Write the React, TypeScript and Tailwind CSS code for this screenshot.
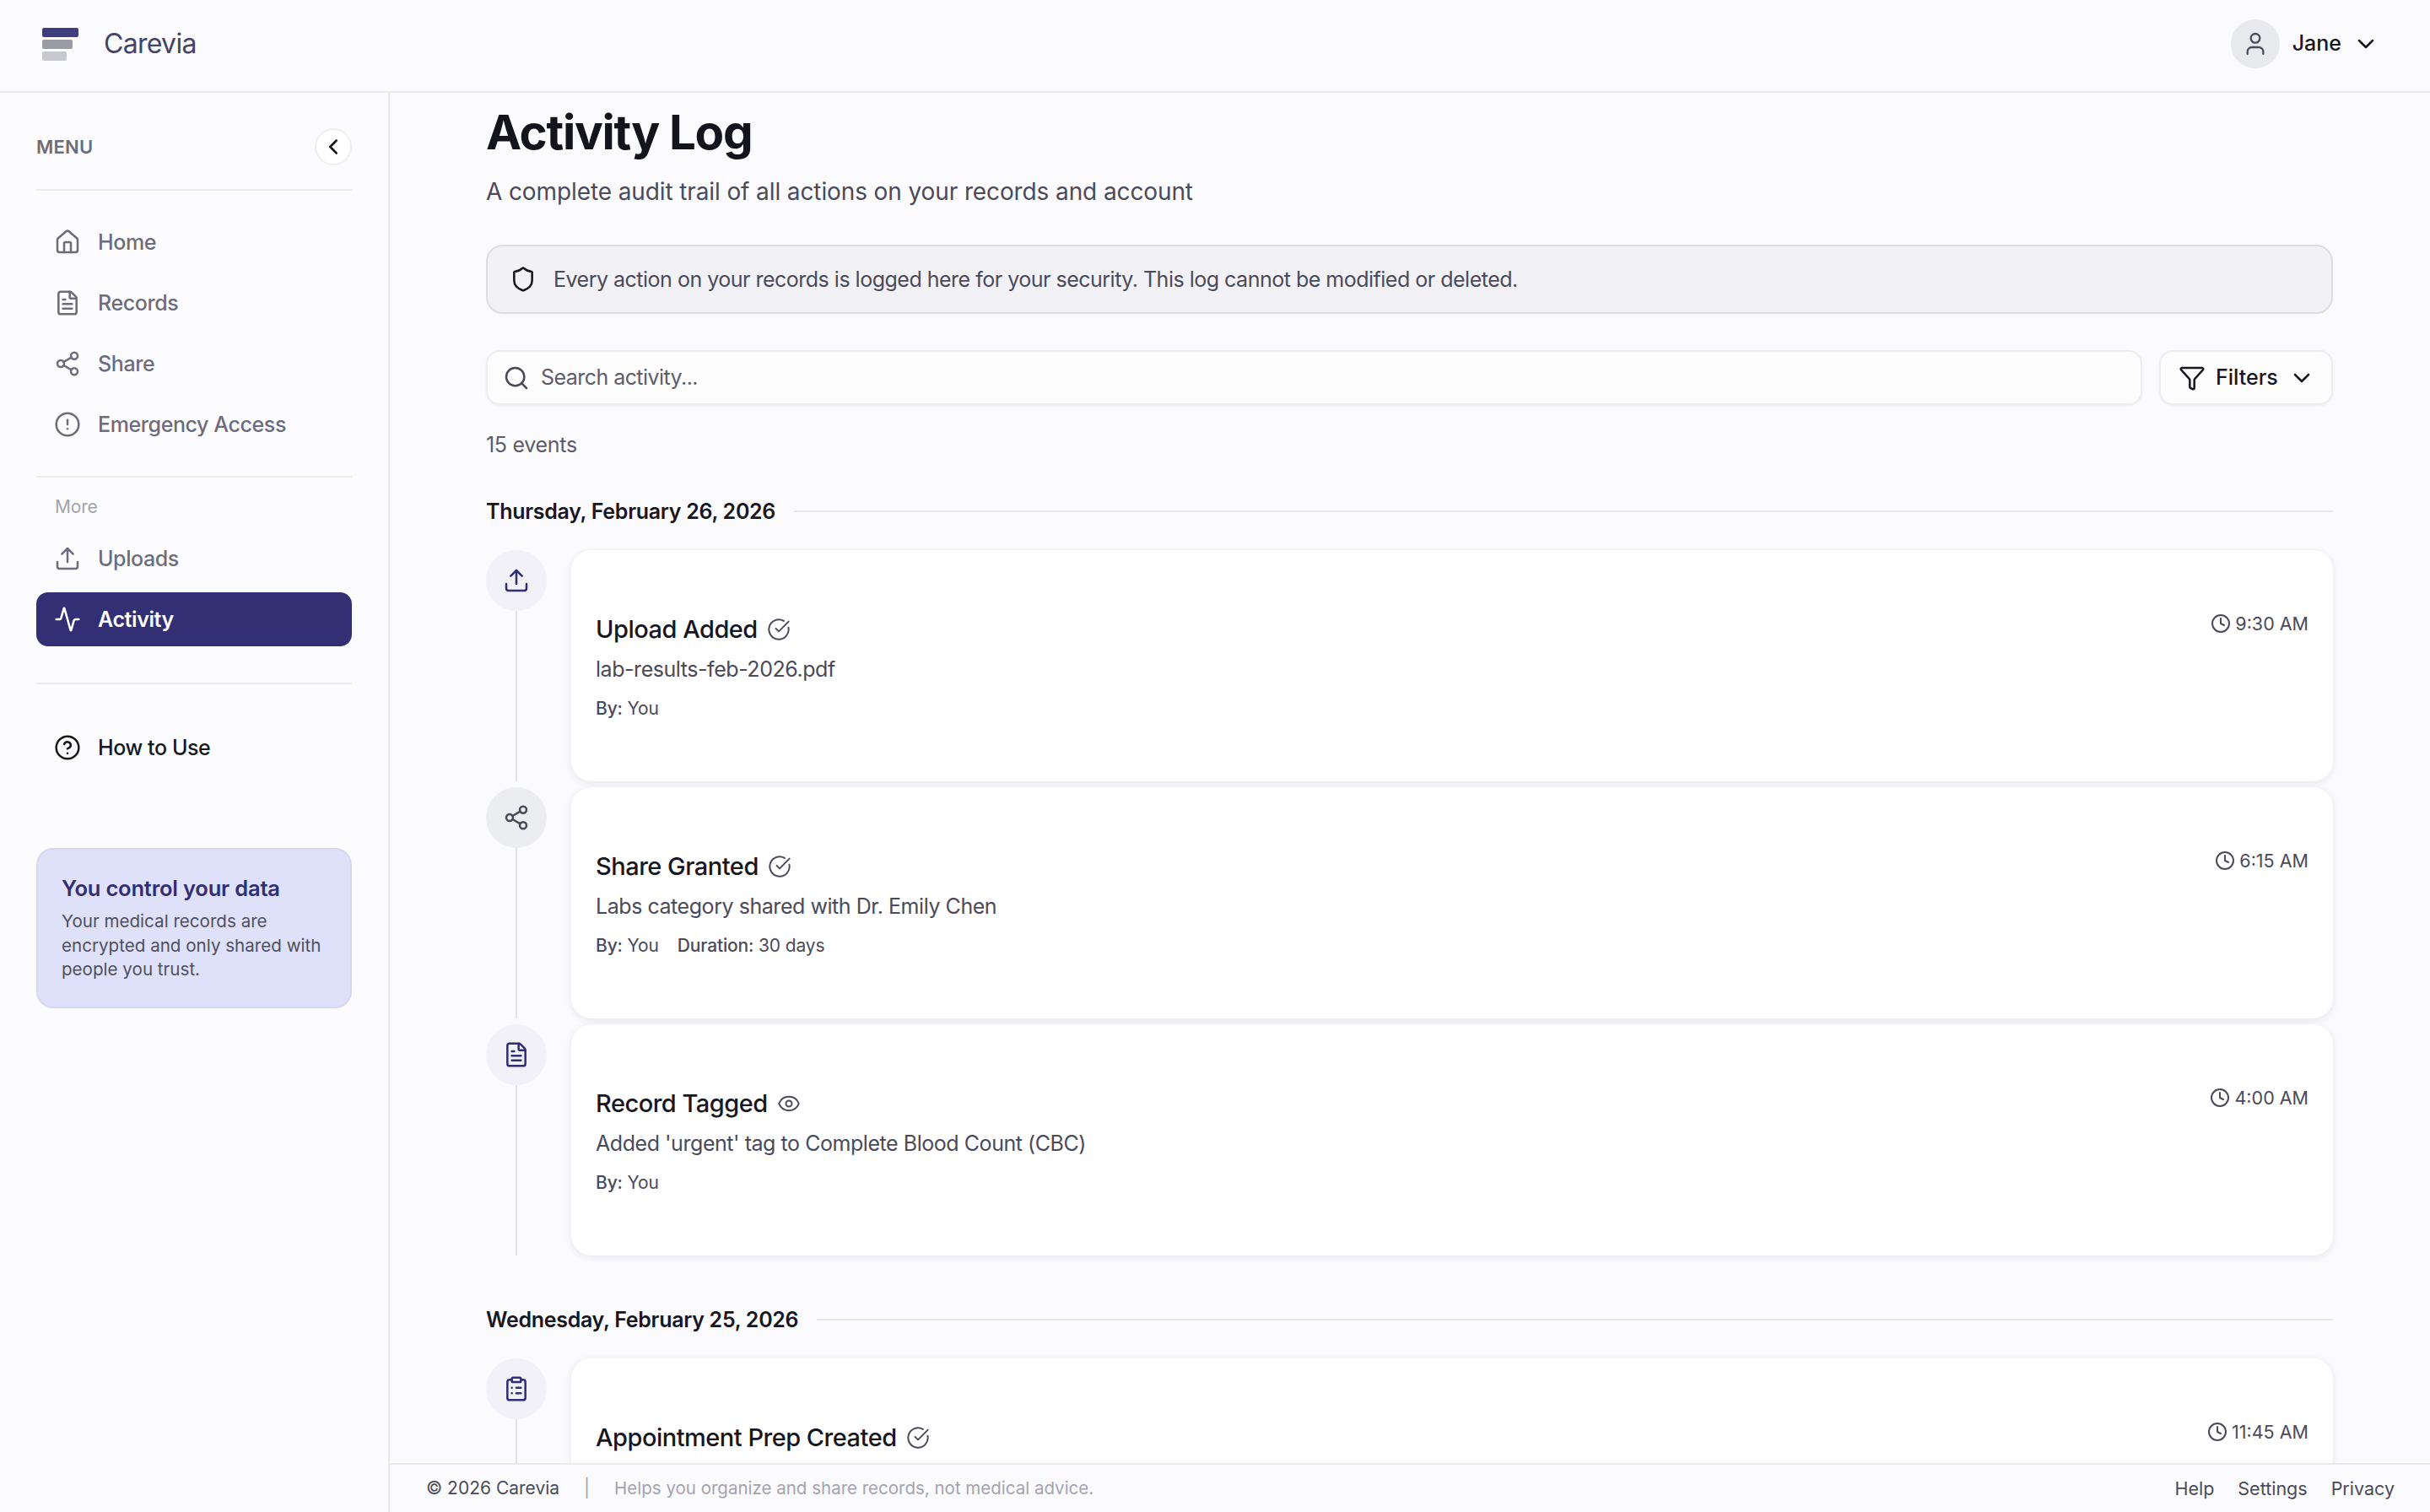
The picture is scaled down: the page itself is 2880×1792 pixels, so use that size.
import React from 'react';
import {
  Activity,
  ChevronDown,
  ChevronLeft,
  CircleAlert,
  CircleCheckBig,
  CircleHelp,
  ClipboardList,
  Clock,
  Eye,
  FileText,
  Funnel,
  House,
  Search,
  Share2,
  Shield,
  Upload,
  User,
} from 'lucide-react';

type IconType = React.ComponentType<{ size?: number; strokeWidth?: number; className?: string }>;

interface LogEvent {
  title: string;
  icon: IconType;
  circle: string;
  iconColor: string;
  status: IconType;
  time: string;
  detail?: string;
  duration?: string;
}

const mainNav: { label: string; icon: IconType }[] = [
  { label: 'Home', icon: House },
  { label: 'Records', icon: FileText },
  { label: 'Share', icon: Share2 },
  { label: 'Emergency Access', icon: CircleAlert },
];

const thursday: LogEvent[] = [
  {
    title: 'Upload Added',
    icon: Upload,
    circle: 'bg-[#f1f1f7]',
    iconColor: 'text-[#312e75]',
    status: CircleCheckBig,
    time: '9:30 AM',
    detail: 'lab-results-feb-2026.pdf',
  },
  {
    title: 'Share Granted',
    icon: Share2,
    circle: 'bg-[#ecedf0]',
    iconColor: 'text-[#4a4a5a]',
    status: CircleCheckBig,
    time: '6:15 AM',
    detail: 'Labs category shared with Dr. Emily Chen',
    duration: '30 days',
  },
  {
    title: 'Record Tagged',
    icon: FileText,
    circle: 'bg-[#f1f1f7]',
    iconColor: 'text-[#312e75]',
    status: Eye,
    time: '4:00 AM',
    detail: "Added 'urgent' tag to Complete Blood Count (CBC)",
  },
];

const wednesday: LogEvent[] = [
  {
    title: 'Appointment Prep Created',
    icon: ClipboardList,
    circle: 'bg-[#f1f1f7]',
    iconColor: 'text-[#312e75]',
    status: CircleCheckBig,
    time: '11:45 AM',
  },
];

const NavItem: React.FC<{ label: string; icon: IconType; active?: boolean; dark?: boolean }> = ({
  label,
  icon: Icon,
  active,
  dark,
}) => (
  <div
    className={`flex h-16 items-center gap-5 rounded-[14px] pl-[21px] text-[25px] tracking-[-0.4px] ${
      active ? 'bg-[#322f75] font-semibold text-white' : dark ? 'font-medium text-[#17171f]' : 'font-medium text-[#6c6c7c]'
    }`}
  >
    <Icon size={32} strokeWidth={1.9} />
    <span className="pt-0.5">{label}</span>
  </div>
);

const TimelineRow: React.FC<{ event: LogEvent; last?: boolean; clipped?: boolean }> = ({ event, last, clipped }) => {
  const Icon = event.icon;
  const Status = event.status;
  return (
    <div className={`flex gap-[29px] ${last ? '' : 'pb-[7px]'}`}>
      <div className="flex w-[72px] shrink-0 flex-col items-center">
        <div className={`flex h-[72px] w-[72px] shrink-0 items-center justify-center rounded-full ${event.circle} ${event.iconColor}`}>
          <Icon size={32} strokeWidth={1.9} />
        </div>
        <div className="w-0.5 flex-1 bg-[#e1e2e9]" />
      </div>
      <div className={`flex-1 rounded-3xl bg-white px-[29px] pt-[70px] shadow-[0_2px_8px_rgba(30,30,70,0.10)] ${clipped ? 'h-[200px]' : 'h-[274px]'}`}>
        <div className="flex items-start justify-between">
          <div>
            <div className="mt-1 flex h-10 items-center gap-[11px] text-[29px] font-medium tracking-[-0.5px] text-[#17171f]">
              <span>{event.title}</span>
              <Status size={28} strokeWidth={1.7} className="text-[#4a4a5a]" />
            </div>
            {event.detail && <div className="mt-[9px] h-9 text-[25px] leading-9 tracking-[-0.45px] text-[#4a4a5a]">{event.detail}</div>}
            {event.detail && (
              <div className="mt-[13px] flex h-8 gap-[22px] text-[21px] leading-8 tracking-[-0.15px] text-[#4a4a5a]">
                <span>
                  <span className="font-medium">By:</span> You
                </span>
                {event.duration && (
                  <span>
                    <span className="font-medium">Duration:</span> {event.duration}
                  </span>
                )}
              </div>
            )}
          </div>
          <div className="mt-px flex h-8 items-center gap-[5px] text-[21.5px] text-[#4a4a5a]">
            <Clock size={24} strokeWidth={2} />
            <span>{event.time}</span>
          </div>
        </div>
      </div>
    </div>
  );
};

const DateHeading: React.FC<{ label: string }> = ({ label }) => (
  <div className="mb-7 flex h-9 items-center gap-[22px]">
    <span className="pt-px text-[25px] font-semibold tracking-[-0.3px] text-[#17171f]">{label}</span>
    <div className="h-0.5 flex-1 bg-[#e6e7ec]" />
  </div>
);

export default function App() {
  return (
    <div className="flex h-screen flex-col overflow-hidden bg-[#fbfbfe] font-[family-name:Inter,sans-serif]">
      <header className="flex h-[110px] shrink-0 items-center justify-between border-b-2 border-[#e9eaee] bg-[#fbfbfe] pb-1 pl-[50px] pr-[60px]">
        <div className="flex items-center gap-[30px]">
          <div className="flex flex-col gap-[3px]">
            <div className="h-[11px] w-[43px] rounded-[2px] bg-[#3f3c80]" />
            <div className="h-[11px] w-9 rounded-[2px] bg-[#9a9aa6]" />
            <div className="h-[11px] w-[29px] rounded-[2px] bg-[#c8c8d0]" />
          </div>
          <span className="text-[32px] font-normal tracking-[-0.7px] text-[#444466]">Carevia</span>
        </div>
        <div className="flex items-center gap-[15px]">
          <div className="flex h-[58px] w-[58px] items-center justify-center rounded-full bg-[#e8e9ec] text-[#4a4a5a]">
            <User size={32} strokeWidth={1.7} />
          </div>
          <span className="text-[25px] font-medium text-[#17171f]">Jane</span>
          <ChevronDown size={32} strokeWidth={1.9} className="-ml-0.5 text-[#17171f]" />
        </div>
      </header>

      <div className="flex min-h-0 flex-1">
        <aside className="w-[462px] shrink-0 border-r-2 border-[#e9eaee] bg-[#fcfcfe] px-[43px] pt-[42px]">
          <div className="flex items-center justify-between border-b-2 border-[#eaebf0] pb-7">
            <span className="pt-px text-[22px] font-semibold tracking-[0.2px] text-[#6c6c7c]">MENU</span>
            <div className="flex h-11 w-11 items-center justify-center rounded-full border-2 border-[#eeeef2] bg-white text-[#17171f]">
              <ChevronLeft size={30} strokeWidth={2} />
            </div>
          </div>

          <nav className="mt-[29px] flex flex-col gap-2">
            {mainNav.map((item) => (
              <NavItem key={item.label} label={item.label} icon={item.icon} />
            ))}
          </nav>

          <div className="mt-[29px] border-t-2 border-[#eaebf0] pt-[19px]">
            <div className="h-8 pl-[22px] text-[21px] leading-8 tracking-[-0.2px] text-[#a3a3b0]">More</div>
            <div className="mt-[13px] flex flex-col gap-2">
              <NavItem label="Uploads" icon={Upload} />
              <NavItem label="Activity" icon={Activity} active />
            </div>
          </div>

          <div className="mt-[43px] border-t-2 border-[#eaebf0] pt-[43px]">
            <NavItem label="How to Use" icon={CircleHelp} dark />
          </div>

          <div className="mt-[87px] h-[190px] rounded-[20px] border-2 border-[#d7d9f2] bg-[#dfe1fb] px-7 pt-7">
            <div className="text-[25.5px] font-semibold leading-9 tracking-[-0.2px] text-[#312e75]">You control your data</div>
            <p className="mt-[7px] text-[20.6px] leading-[28.5px] text-[#4f4f5e]">
              Your medical records are encrypted and only shared with people you trust.
            </p>
          </div>
        </aside>

        <div className="flex min-w-0 flex-1 flex-col">
          <main className="min-h-0 flex-1 overflow-hidden pl-[114px] pr-[115px] pt-[11px]">
            <h1 className="text-[56.5px] font-bold leading-[72px] tracking-[-1.3px] text-[#14141c]">Activity Log</h1>
            <p className="mt-3.5 text-[28px] leading-10 tracking-[-0.11px] text-[#4a4a5a]">
              A complete audit trail of all actions on your records and account
            </p>

            <div className="mt-[43px] flex h-[82px] items-center gap-5 rounded-[20px] border-2 border-[#dcdce3] bg-[#f1f1f6] pl-[26px]">
              <Shield size={32} strokeWidth={1.9} className="text-[#17171f]" />
              <span className="pt-0.5 text-[25px] tracking-[-0.5px] text-[#4a4a5a]">
                Every action on your records is logged here for your security. This log cannot be modified or deleted.
              </span>
            </div>

            <div className="mt-[43px] flex gap-5">
              <div className="flex h-[65px] flex-1 items-center gap-[13px] rounded-2xl border-2 border-[#ededf1] bg-[#fdfdfe] pl-[18px] shadow-[0_1px_3px_rgba(30,30,70,0.06)]">
                <Search size={32} strokeWidth={1.9} className="text-[#4a4a5a]" />
                <span className="text-[25px] tracking-[-0.55px] text-[#5c5c6b]">Search activity...</span>
              </div>
              <div className="flex h-[65px] w-[206px] items-center rounded-2xl border-2 border-[#ededf1] bg-[#fdfdfe] pl-[21px] shadow-[0_1px_3px_rgba(30,30,70,0.06)]">
                <Funnel size={32} strokeWidth={1.9} className="text-[#17171f]" />
                <span className="ml-3 text-[25px] font-medium text-[#17171f]">Filters</span>
                <ChevronDown size={32} strokeWidth={1.9} className="ml-3 text-[#17171f]" />
              </div>
            </div>

            <div className="mt-[29px] mb-[43px] h-9 text-[25px] leading-9 tracking-[-0.3px] text-[#5c5c6b]">15 events</div>

            <DateHeading label="Thursday, February 26, 2026" />
            {thursday.map((event, index) => (
              <TimelineRow key={event.title} event={event} last={index === thursday.length - 1} />
            ))}

            <div className="mt-[58px]">
              <DateHeading label="Wednesday, February 25, 2026" />
              {wednesday.map((event) => (
                <TimelineRow key={event.title} event={event} last clipped />
              ))}
            </div>
          </main>

          <footer className="flex h-[58px] shrink-0 items-center justify-between border-t-2 border-[#e9eaee] bg-[#fbfbfe] pl-[43px] pr-[42px]">
            <div className="flex items-center">
              <span className="text-[21px] text-[#4a4a5a]">© 2026 Carevia</span>
              <span className="ml-[29px] text-[21px] text-[#a3a3b0]">|</span>
              <span className="ml-[29px] text-[20.5px] text-[#a3a3b0]">Helps you organize and share records, not medical advice.</span>
            </div>
            <div className="flex gap-[28px] text-[21.5px] text-[#4a4a5a]">
              <span>Help</span>
              <span>Settings</span>
              <span>Privacy</span>
            </div>
          </footer>
        </div>
      </div>
    </div>
  );
}
